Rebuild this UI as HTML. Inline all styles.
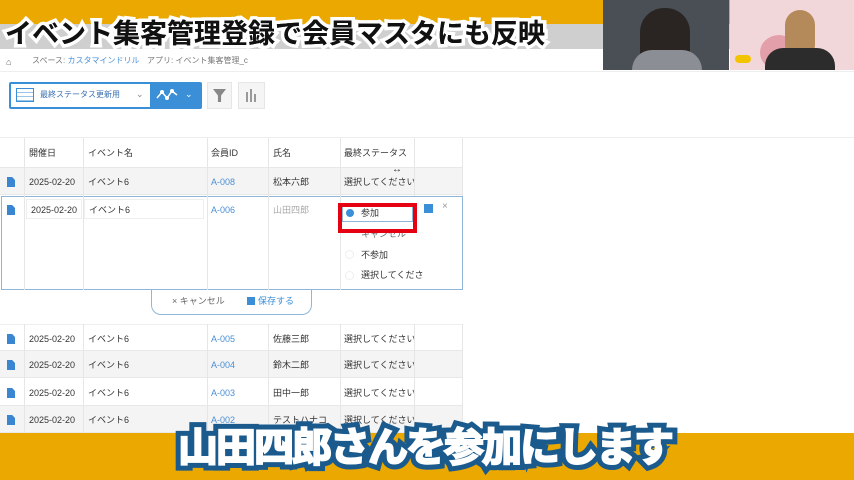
<!DOCTYPE html>
<html><head><meta charset="utf-8"><style>
*{margin:0;padding:0;box-sizing:border-box}
body{width:854px;height:480px;overflow:hidden;position:relative;background:#fff;font-family:"Liberation Sans","Noto Sans CJK JP",sans-serif;font-size:9px;line-height:10px;color:#333}
.a{position:absolute}
.t{position:absolute;white-space:nowrap}
.row{position:absolute;left:0;width:462px;height:27px;border-bottom:1px solid #e8e8e8}
.row span{position:absolute;top:9px;white-space:nowrap;line-height:10px}
.vl{position:absolute;width:1px;background:#e6e6e6}
.doc{position:absolute;left:7px;width:8px;height:10px;background:#3a86d0;clip-path:polygon(0 0,65% 0,100% 30%,100% 100%,0 100%)}
.id{color:#4a8fd6}
</style></head><body>
<div class="a" style="left:0;top:0;width:854px;height:24px;background:#eba800"></div>
<div class="a" style="left:0;top:24px;width:854px;height:25px;background:#cfcfcf"></div>
<div class="a" style="left:0;top:49px;width:854px;height:23px;background:#fff;border-bottom:1px solid #eee"></div>
<div class="t" style="left:6px;top:57px;color:#666">⌂</div>
<div class="t" style="left:32px;top:56px;color:#777;font-size:8px">スペース: <span style="color:#4a8fd6">カスタマインドリル</span></div>
<div class="t" style="left:147px;top:56px;color:#777;font-size:8px">アプリ: イベント集客管理_c</div>
<div class="t" style="left:5px;top:18px;font-size:27px;line-height:32px;font-weight:bold;color:#111;-webkit-text-stroke:7px #fff;paint-order:stroke fill;letter-spacing:0px">イベント集客管理登録で会員マスタにも反映</div>
<div class="t" style="left:5px;top:18px;font-size:27px;line-height:32px;font-weight:bold;color:#111;letter-spacing:0px">イベント集客管理登録で会員マスタにも反映</div>
<!-- video -->
<div class="a" style="left:603px;top:0;width:126px;height:70px;background:#4a4f55"></div>
<div class="a" style="left:640px;top:8px;width:50px;height:62px;background:#2a2522;border-radius:24px 24px 8px 8px"></div>
<div class="a" style="left:632px;top:50px;width:70px;height:20px;background:#8b8f95;border-radius:20px 20px 0 0"></div>
<div class="a" style="left:730px;top:0;width:124px;height:70px;background:#f2d7da"></div>
<div class="a" style="left:760px;top:35px;width:38px;height:35px;background:#e4a0aa;border-radius:50%"></div>
<div class="a" style="left:785px;top:10px;width:30px;height:50px;background:#b58a5a;border-radius:15px"></div>
<div class="a" style="left:765px;top:48px;width:70px;height:22px;background:#2c2c2c;border-radius:18px 18px 0 0"></div>
<div class="a" style="left:735px;top:55px;width:16px;height:8px;background:#f2c400;border-radius:4px"></div>
<!-- toolbar -->
<div class="a" style="left:9px;top:82px;width:193px;height:27px;background:#3a8fd6;border-radius:2px"></div>
<div class="a" style="left:11px;top:84px;width:139px;height:23px;background:#fff"></div>
<div class="a" style="left:16px;top:88px;width:18px;height:14px;border:1.5px solid #3a8fd6;background:repeating-linear-gradient(#fff 0 3px,#9cc5ea 3px 4px)"></div>
<div class="t" style="left:40px;top:90px;color:#3a6fb0;font-size:8px">最終ステータス更新用</div>
<div class="t" style="left:136px;top:89px;color:#888">⌄</div>
<svg class="a" style="left:156px;top:88px" width="22" height="14"><polyline points="1,10 6,4 11,10 16,3 21,7" fill="none" stroke="#fff" stroke-width="1.5"/><circle cx="6" cy="4" r="2" fill="#fff"/><circle cx="11" cy="10" r="2" fill="#fff"/><circle cx="16" cy="3" r="2" fill="#fff"/></svg>
<div class="t" style="left:185px;top:89px;color:#fff">⌄</div>
<div class="a" style="left:207px;top:82px;width:25px;height:27px;background:#f5f5f5;border:1px solid #e6e6e6"></div>
<div class="a" style="left:213px;top:89px;width:13px;height:13px;background:#888;clip-path:polygon(0 0,100% 0,62% 50%,62% 100%,38% 100%,38% 50%)"></div>
<div class="a" style="left:238px;top:82px;width:27px;height:27px;background:#f5f5f5;border:1px solid #e6e6e6"></div>
<div class="a" style="left:246px;top:92px;width:2px;height:10px;background:#999"></div>
<div class="a" style="left:250px;top:89px;width:2px;height:13px;background:#999"></div>
<div class="a" style="left:254px;top:94px;width:2px;height:8px;background:#999"></div>
<div class="a" style="left:0;top:137px;width:854px;height:1px;background:#eee"></div>
<!-- header -->
<div class="row" style="top:138px;height:30px;background:#fff"><span style="left:29px;top:10px">開催日</span><span style="left:88px;top:10px">イベント名</span><span style="left:211px;top:10px">会員ID</span><span style="left:273px;top:10px">氏名</span><span style="left:344px;top:10px">最終ステータス</span></div>
<div class="row" style="top:168px;background:#f4f4f4"><div class="doc" style="top:9px"></div><span style="left:29px">2025-02-20</span><span style="left:88px">イベント6</span><span class="id" style="left:211px">A-008</span><span style="left:273px">松本六郎</span><span style="left:344px">選択してください</span></div>
<div class="t" style="left:392px;top:165px;font-size:10px">↔</div>
<!-- edit row -->
<div class="a" style="left:1px;top:196px;width:462px;height:94px;border:1px solid #8fb6d8;background:#fff"></div>
<div class="doc" style="top:205px"></div>
<div class="a" style="left:26px;top:199px;width:56px;height:20px;border:1px solid #eee"></div>
<div class="a" style="left:84px;top:199px;width:120px;height:20px;border:1px solid #eee"></div>
<div class="t" style="left:31px;top:205px">2025-02-20</div>
<div class="t" style="left:89px;top:205px">イベント6</div>
<div class="t id" style="left:211px;top:205px">A-006</div>
<div class="t" style="left:273px;top:205px;color:#aaa">山田四郎</div>
<div class="a" style="left:338px;top:203px;width:79px;height:30px;border:4px solid #e50012;z-index:2"></div>
<div class="a" style="left:342px;top:205px;width:71px;height:17px;border:1px solid #8fb6d8;background:#fff"></div>
<div class="a" style="left:346px;top:209px;width:8px;height:8px;border-radius:50%;background:#3a8fd6"></div>
<div class="t" style="left:361px;top:208px">参加</div>
<div class="t" style="left:361px;top:229px;color:#666">キャンセル</div>
<div class="a" style="left:345px;top:250px;width:9px;height:9px;border-radius:50%;border:1px solid #eee"></div>
<div class="t" style="left:361px;top:250px">不参加</div>
<div class="a" style="left:345px;top:271px;width:9px;height:9px;border-radius:50%;border:1px solid #eee"></div>
<div class="t" style="left:361px;top:270px">選択してくださ</div>
<div class="a" style="left:424px;top:204px;width:9px;height:9px;background:#3a8fd6"></div>
<div class="t" style="left:442px;top:202px;color:#999;font-size:10px">×</div>
<!-- save bar -->
<div class="a" style="left:151px;top:290px;width:161px;height:25px;border:1px solid #8fb6d8;border-top:none;border-radius:0 0 10px 10px;background:#fff"></div>
<div class="t" style="left:172px;top:296px;color:#666">× キャンセル</div>
<div class="a" style="left:247px;top:297px;width:8px;height:8px;background:#3a8fd6"></div>
<div class="t" style="left:258px;top:296px;color:#3a8fd6">保存する</div>
<!-- rows -->
<div class="row" style="top:324px;border-top:1px solid #eee"><div class="doc" style="top:9px"></div><span style="left:29px">2025-02-20</span><span style="left:88px">イベント6</span><span class="id" style="left:211px">A-005</span><span style="left:273px">佐藤三郎</span><span style="left:344px">選択してください</span></div>
<div class="row" style="top:351px;background:#f4f4f4"><div class="doc" style="top:9px"></div><span style="left:29px">2025-02-20</span><span style="left:88px">イベント6</span><span class="id" style="left:211px">A-004</span><span style="left:273px">鈴木二郎</span><span style="left:344px">選択してください</span></div>
<div class="row" style="top:379px"><div class="doc" style="top:9px"></div><span style="left:29px">2025-02-20</span><span style="left:88px">イベント6</span><span class="id" style="left:211px">A-003</span><span style="left:273px">田中一郎</span><span style="left:344px">選択してください</span></div>
<div class="row" style="top:406px;background:#f4f4f4"><div class="doc" style="top:9px"></div><span style="left:29px">2025-02-20</span><span style="left:88px">イベント6</span><span class="id" style="left:211px">A-002</span><span style="left:273px">テストハナコ</span><span style="left:344px">選択してください</span></div>
<div class="vl" style="left:24px;top:138px;height:152px"></div>
<div class="vl" style="left:83px;top:138px;height:152px"></div>
<div class="vl" style="left:207px;top:138px;height:152px"></div>
<div class="vl" style="left:268px;top:138px;height:152px"></div>
<div class="vl" style="left:340px;top:138px;height:152px"></div>
<div class="vl" style="left:414px;top:138px;height:58px"></div>
<div class="vl" style="left:462px;top:138px;height:58px"></div>
<div class="vl" style="left:24px;top:324px;height:109px"></div>
<div class="vl" style="left:83px;top:324px;height:109px"></div>
<div class="vl" style="left:207px;top:324px;height:109px"></div>
<div class="vl" style="left:268px;top:324px;height:109px"></div>
<div class="vl" style="left:340px;top:324px;height:109px"></div>
<div class="vl" style="left:414px;top:324px;height:109px"></div>
<div class="vl" style="left:462px;top:324px;height:109px"></div>
<!-- bottom -->
<div class="a" style="left:0;top:433px;width:854px;height:47px;background:#eba800"></div>
<div class="t" style="left:178px;top:423px;font-size:40px;line-height:50px;font-weight:bold;color:#1b5a8c;-webkit-text-stroke:12px #1b5a8c;paint-order:stroke fill;letter-spacing:-2px">山田四郎さんを参加にします</div>
<div class="t" style="left:178px;top:423px;font-size:40px;line-height:50px;font-weight:bold;color:#fff;-webkit-text-stroke:2px #fff;letter-spacing:-2px">山田四郎さんを参加にします</div>
</body></html>
